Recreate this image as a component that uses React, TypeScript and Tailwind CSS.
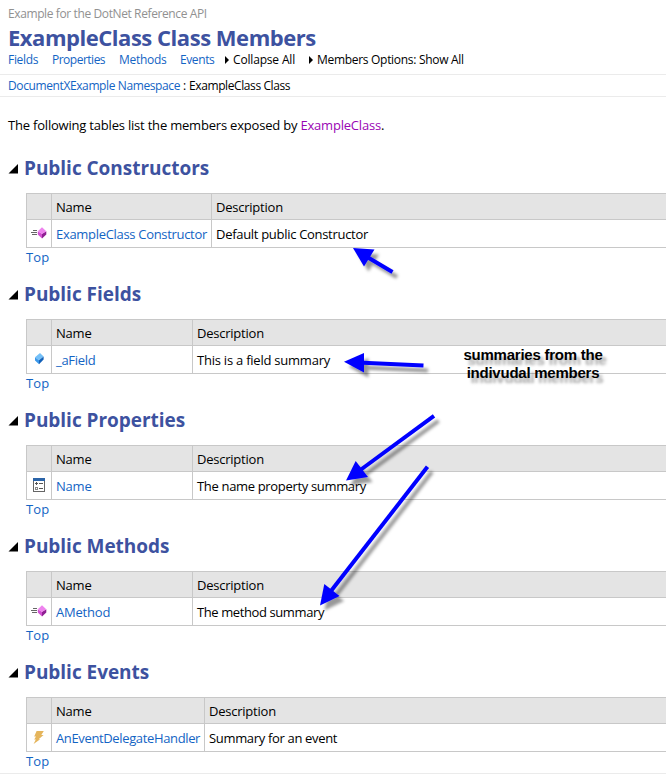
import type { ReactNode } from "react";

const link = "text-[#1364c4]";

function MethodIcon() {
  return (
    <svg width="16" height="12" viewBox="0 0 16 12" className="mt-px block">
      <path d="M2 3.5h4M0 5.5h6M1 7.5h5" stroke="#666" strokeWidth="1" shapeRendering="crispEdges" />
      <path d="M6.8 4.2 11 6.8V11.4L6.8 7.6z" fill="#d24fd2" />
      <path d="M15.3 4.2 11 6.8V11.4L15.3 7.6z" fill="#8f1f93" />
      <path d="M11 .2 15.3 4.3 11 6.9 6.8 4.3z" fill="#ee83ee" />
    </svg>
  );
}

function FieldIcon() {
  return (
    <svg width="16" height="12" viewBox="0 0 16 12" className="mt-px block">
      <path d="M9 0 12.6 3.5 8 7.2 4 4.2z" fill="#74c0f8" />
      <path d="M4 4.2 8 7.2V11.2L4 7.4z" fill="#3b98ea" />
      <path d="M12.6 3.4 8 7.2V11.2L12.6 6.5z" fill="#1260b8" />
    </svg>
  );
}

function PropertyIcon() {
  return (
    <svg width="12" height="14" viewBox="0 0 12 14" className="block" shapeRendering="crispEdges">
      <path d="M.5 .5h11v13H.5z" fill="#fff" stroke="#666" />
      <path d="M0 0h12v3H0z" fill="#2b64a8" />
      <path d="M2 5.5h3M3.5 4v3M6 5.5h4M6 10.5h4" stroke="#555" fill="none" />
      <path d="M2.5 9.5h2v2h-2z" stroke="#888" fill="none" />
    </svg>
  );
}

function EventIcon() {
  return (
    <svg width="12" height="14" viewBox="0 0 12 14" className="block">
      <path d="M3.6 1h7.2L8.3 5H10.6L5.6 9.2H7.2L.6 14 2.8 9.4H1.2L3 6.4H1.2z" fill="#e5b55c" />
    </svg>
  );
}

interface Group {
  title: string;
  icon: ReactNode;
  name: string;
  nameCls: string;
  colCls: string;
  desc: string;
  descCls: string;
}

const groups: Group[] = [
  { title: "Public Constructors", icon: <MethodIcon />, name: "ExampleClass Constructor", nameCls: "tracking-[-0.31px]", colCls: "w-[160px]", desc: "Default public Constructor", descCls: "tracking-[-0.3px]" },
  { title: "Public Fields", icon: <FieldIcon />, name: "_aField", nameCls: "tracking-[-0.3px]", colCls: "w-[141px]", desc: "This is a field summary", descCls: "tracking-[-0.23px]" },
  { title: "Public Properties", icon: <PropertyIcon />, name: "Name", nameCls: "tracking-[-0.2px]", colCls: "w-[141px]", desc: "The name property summary", descCls: "tracking-[-0.33px]" },
  { title: "Public Methods", icon: <MethodIcon />, name: "AMethod", nameCls: "tracking-[-0.2px]", colCls: "w-[141px]", desc: "The method summary", descCls: "tracking-[-0.4px]" },
  { title: "Public Events", icon: <EventIcon />, name: "AnEventDelegateHandler", nameCls: "tracking-[-0.36px]", colCls: "w-[153px]", desc: "Summary for an event", descCls: "tracking-[-0.33px]" },
];

function MemberSection({ g }: { g: Group }) {
  return (
    <section className="h-[126px]">
      <h2 className="flex h-[38px] items-start pl-2 text-[19px] leading-[26px] font-bold tracking-[-0.03px] text-[#3d52a0]">
        <svg width="10" height="10" viewBox="0 0 10 10" className="mt-[9px] mr-[6px]">
          <path d="M10 0v9.5H.5z" fill="#000" />
        </svg>
        {g.title}
      </h2>
      <div className="ml-[26px] border border-r-0 border-[#c8c8c8] leading-[25px]">
        <div className="flex h-[26px] border-b border-[#c8c8c8] bg-[#e4e4e4]">
          <div className="w-[25px] border-r border-[#c8c8c8]" />
          <div className={`${g.colCls} border-r border-[#c8c8c8] pt-px pl-1 tracking-[-0.2px]`}>Name</div>
          <div className="flex-1 pt-px pl-1 tracking-[-0.23px]">Description</div>
        </div>
        <div className="flex h-[27px]">
          <div className="flex w-[25px] justify-center border-r border-[#c8c8c8] pt-[6px]">{g.icon}</div>
          <div className={`${g.colCls} ${g.nameCls} ${link} border-r border-[#c8c8c8] pt-0.5 pl-1`}>{g.name}</div>
          <div className={`flex-1 pt-0.5 pl-1 ${g.descCls}`}>{g.desc}</div>
        </div>
      </div>
      <a className={`ml-[26px] block leading-[18px] tracking-[0.1px] ${link}`}>Top</a>
    </section>
  );
}

const arrows = [
  { head: "353,248 374.5,249.5 364,266.5", from: [368, 257.5], to: [392.5, 272] },
  { head: "344,361.7 364,353 364,372.5", from: [363, 362.7], to: [423.5, 365.6] },
  { head: "346,480.5 355.7,461 368,477", from: [361, 469.5], to: [434, 415.8] },
  { head: "320,605.5 324.3,584 339.5,596", from: [331, 591], to: [427.5, 466.8] },
];

function Annotations() {
  return (
    <>
      <svg width="666" height="775" className="pointer-events-none absolute top-0 left-0">
        <defs>
          <filter id="arrow-shadow" filterUnits="userSpaceOnUse" x="0" y="0" width="666" height="775">
            <feDropShadow dx="4.5" dy="5" stdDeviation="1.6" floodColor="#000" floodOpacity="0.4" />
          </filter>
        </defs>
        <g filter="url(#arrow-shadow)" fill="#0000ff" stroke="#0000ff">
          {arrows.map((a) => (
            <g key={a.head}>
              <polygon points={a.head} stroke="none" />
              <line x1={a.from[0]} y1={a.from[1]} x2={a.to[0]} y2={a.to[1]} strokeWidth="4" />
            </g>
          ))}
        </g>
      </svg>
      <div className="absolute top-[346px] left-[443px] w-[180px] text-center font-['Liberation_Sans',Arial,sans-serif] text-[15px] leading-[18px] font-bold tracking-[-0.24px] [text-shadow:4px_5px_3px_rgba(0,0,0,0.35)]">
        summaries from the
        <br />
        indivudal members
      </div>
    </>
  );
}

function Caret() {
  return (
    <svg width="4" height="8" viewBox="0 0 4 8" className="mt-[5px] mr-[4px]">
      <path d="M0 0 4 4 0 8z" fill="#000" />
    </svg>
  );
}

export default function App() {
  return (
    <div className="relative h-[775px] w-[666px] overflow-hidden bg-white font-['Open_Sans','Noto_Sans',sans-serif] text-[13px] whitespace-nowrap text-black">
      <header className="h-[74px] pl-2">
        <div className="h-[24px] pt-[5px] text-[12px] leading-[18px] tracking-[-0.39px] text-[#919191]">Example for the DotNet Reference API</div>
        <h1 className="h-[27px] text-[22px] leading-[26px] font-bold tracking-[-0.47px] text-[#3d52a0]">ExampleClass Class Members</h1>
        <nav className="flex text-[12px] leading-[18px]">
          <a className={`w-[44px] tracking-[-0.3px] ${link}`}>Fields</a>
          <a className={`w-[67px] tracking-[-0.5px] ${link}`}>Properties</a>
          <a className={`w-[61px] tracking-[-0.3px] ${link}`}>Methods</a>
          <a className={`w-[45px] tracking-[-0.4px] ${link}`}>Events</a>
          <span className="flex w-[84px] tracking-[-0.17px]"><Caret />Collapse All</span>
          <span className="flex tracking-[-0.3px]"><Caret />Members Options: Show All</span>
        </nav>
      </header>
      <div className="flex h-[23px] border-y border-[#ebebeb] pl-2 text-[12px] leading-[22px]">
        <a className={`w-[175px] tracking-[-0.39px] ${link}`}>DocumentXExample Namespace</a>
        <span className="w-[6px]">:</span>
        <span className="tracking-[-0.4px]">ExampleClass Class</span>
      </div>
      <p className="h-[58px] pt-[18px] pl-2 leading-[20px] tracking-[-0.2px]">
        The following tables list the members exposed by <a className="text-[#9a05b4]">ExampleClass</a>.
      </p>
      {groups.map((g) => (
        <MemberSection key={g.title} g={g} />
      ))}
      <div className="absolute top-[773px] left-0 h-px w-full bg-[#ebebeb]" />
      <Annotations />
    </div>
  );
}
